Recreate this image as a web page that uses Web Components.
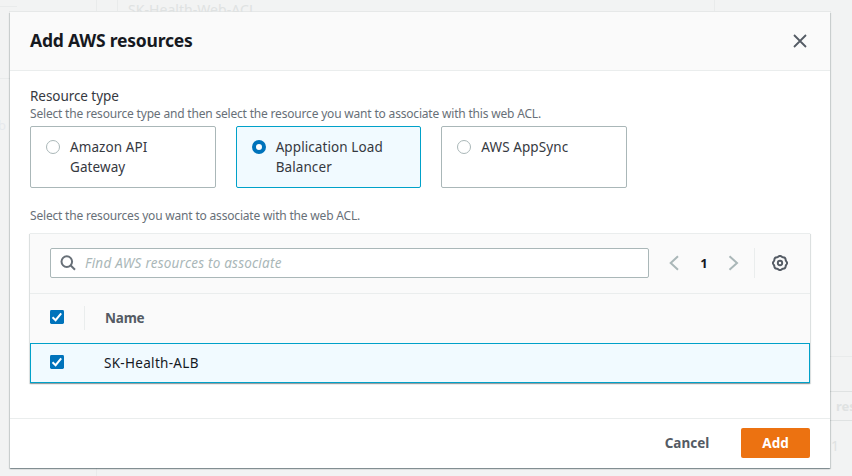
<!DOCTYPE html>
<html lang="en">
<head>
<meta charset="utf-8">
<title>Add AWS resources</title>
<style>
body { margin: 0; background: #f2f3f3; font-family: "Noto Sans", "Open Sans", sans-serif; font-size: 14px; color: #16191f; overflow: hidden; }
</style>
</head>
<body>
<page-shell></page-shell>
<script>
const define = (name, html, init) => {
  const t = document.createElement('template');
  t.innerHTML = html;
  customElements.define(name, class extends HTMLElement {
    constructor() {
      super();
      this.attachShadow({ mode: 'open' }).append(t.content.cloneNode(true));
    }
    connectedCallback() { if (init) init(this, this.shadowRoot); }
  });
};

define('check-box', `
<style>:host{display:block;width:14px;height:14px}svg{display:block}</style>
<svg width="14" height="14" viewBox="0 0 14 14"><rect width="14" height="14" rx="1.4" fill="#0073bb"/><path d="M2.5 7.3 5.6 10.2 11.2 3.4" fill="none" stroke="#fff" stroke-width="2"/></svg>`);

define('radio-tile', `
<style>
:host{display:flex;box-sizing:border-box;height:62px;border:1px solid #aab7b8;border-radius:2px;padding:10px 15px;gap:10px;background:#fff;line-height:20px;font-size:13.5px;letter-spacing:.09px;color:#36393f}
:host([checked]){border-color:#00a1c9;background:#f1faff}
i{box-sizing:border-box;flex:none;width:14px;height:14px;margin-top:3px;border:1px solid #aab7b8;border-radius:50%;background:#fff}
:host([checked]) i{border:4px solid #0073bb}
span{white-space:nowrap}
</style><i></i><span><slot></slot></span>`);

define('modal-header', `
<style>
:host{display:flex;box-sizing:border-box;height:59px;align-items:center;justify-content:space-between;padding:0 23px 0 20px;background:#fafafa;border-bottom:1px solid #eaeded}
h2{margin:0 0 2px;font-size:17.5px;line-height:22px;font-weight:700;letter-spacing:-.2px;color:#16191f}
svg{display:block}
</style><h2><slot></slot></h2>
<svg width="14" height="14" viewBox="0 0 14 14"><path d="M1 1 13 13M13 1 1 13" stroke="#545b64" stroke-width="1.8"/></svg>`);

define('search-field', `
<style>
:host{display:flex;box-sizing:border-box;width:599px;height:30px;align-items:center;gap:9px;padding-left:9px;border:1px solid #aab7b8;border-radius:2px;background:#fff;color:#aab7b8;font-size:13.5px;letter-spacing:.22px;font-style:italic}
svg{flex:none}
</style>
<svg width="16" height="16" viewBox="0 0 16 16" fill="none" stroke="#687078" stroke-width="2"><circle cx="6.8" cy="6.6" r="5.3"/><path d="M10.5 10.3 15 14.8"/></svg><span><slot></slot></span>`);

define('table-pager', `
<style>
:host{display:flex;align-items:center;height:30px}
svg{display:block}
b{width:10px;margin:0 19px 0 20px;font-size:13px;text-align:center}
.rule{width:1px;height:30px;margin:0 17px 0 15px;background:#eaeded}
</style>
<svg width="11" height="16" viewBox="0 0 11 16"><path d="M10 1.2 2.7 8 10 14.8" fill="none" stroke="#aab7b8" stroke-width="2"/></svg>
<b>1</b>
<svg width="11" height="16" viewBox="0 0 11 16"><path d="M1.5 1.2 9 8 1.5 14.8" fill="none" stroke="#aab7b8" stroke-width="2"/></svg>
<span class="rule"></span>
<svg id="gear" width="16" height="16" viewBox="0 0 16 16" fill="none" stroke="#545b64" stroke-width="2"><path/><circle cx="8" cy="8" r="2.2" stroke-width="1.9"/></svg>`,
(el, root) => {
  let d = '';
  for (let i = 0; i <= 96; i++) {
    const a = i * Math.PI / 48, r = 6.7 + .35 * Math.cos(8 * a);
    d += (i ? 'L' : 'M') + (8 + r * Math.cos(a)).toFixed(2) + ' ' + (8 + r * Math.sin(a)).toFixed(2);
  }
  root.querySelector('#gear path').setAttribute('d', d + 'Z');
});

define('resource-table', `
<style>
:host{display:block;height:150px;border-top:1px solid #eaeded;box-sizing:border-box;box-shadow:0 1px 1px rgba(0,28,36,.3),1px 1px 1px rgba(0,28,36,.09),-1px 1px 1px rgba(0,28,36,.09);background:#fafafa}
.tools{display:flex;box-sizing:border-box;height:60px;justify-content:space-between;align-items:center;padding:0 22px 1px 20px;border-bottom:1px solid #eaeded}
.row{display:flex;box-sizing:border-box;align-items:center;padding-left:20px}
.head{height:49px;padding-bottom:2px;color:#545b64;font-weight:700;font-size:13.5px}
.head check-box{margin-bottom:2px}
.head i{width:1px;height:24px;margin:0 20px;background:#eaeded}
.head span{letter-spacing:-.2px}
.item{height:40px;border:1px solid #00a1c9;padding:0 0 2px 19px;gap:40px;background:#f1faff;font-size:13.5px}
.item span{letter-spacing:.3px;margin-top:2px}
</style>
<div class="tools"><search-field><slot name="placeholder"></slot></search-field><table-pager></table-pager></div>
<div class="row head"><check-box></check-box><i></i><span>Name</span></div>
<div class="row item"><check-box></check-box><span><slot></slot></span></div>`);

define('action-button', `
<style>
:host{display:flex;align-items:center;justify-content:center;box-sizing:border-box;height:30px;width:86px;border-radius:2px;font-weight:700;font-size:13.5px;color:#545b64}
:host([primary]){width:69px;background:#ec7211;color:#fff}
</style><span><slot></slot></span>`);

define('modal-dialog', `
<style>
:host{display:flex;flex-direction:column;box-sizing:border-box;width:820px;height:456px;background:#fff;box-shadow:0 1px 1px rgba(0,28,36,.3),1px 1px 1px rgba(0,28,36,.12),-1px 1px 1px rgba(0,28,36,.12)}
.body{display:flex;flex-direction:column;flex:1;padding:15px 20px 0}
.label{height:20px;line-height:20px;font-size:13.5px;letter-spacing:-.06px;color:#36393f}
.hint{height:16px;line-height:16px;font-size:12px;letter-spacing:-.187px;color:#687078;white-space:nowrap}
.tiles{display:grid;grid-template-columns:repeat(3,1fr);gap:20px;width:597px;margin:4px 0 20px}
.foot{display:flex;box-sizing:border-box;height:50px;justify-content:flex-end;align-items:center;gap:11px;padding:0 20px 1px 0;border-top:1px solid #eaeded}
resource-table{margin-top:9px}
</style>
<modal-header>Add AWS resources</modal-header>
<div class="body">
<div class="label"><span>Resource type</span></div>
<div class="hint"><span>Select the resource type and then select the resource you want to associate with this web ACL.</span></div>
<div class="tiles"><radio-tile>Amazon API<br>Gateway</radio-tile><radio-tile checked>Application Load<br>Balancer</radio-tile><radio-tile>AWS AppSync</radio-tile></div>
<div class="hint"><span>Select the resources you want to associate with the web ACL.</span></div>
<resource-table><span slot="placeholder">Find AWS resources to associate</span>SK-Health-ALB</resource-table>
</div>
<div class="foot"><action-button>Cancel</action-button><action-button primary>Add</action-button></div>`);

define('page-backdrop', `
<style>
:host{position:absolute;inset:0;color:#dfe2e2;overflow:hidden}
i,span{position:absolute;white-space:nowrap}
i{background:#e9ebeb}
</style>
<i style="left:96px;top:0;width:1px;height:476px"></i><i style="left:117px;top:0;width:1px;height:12px"></i><i style="left:714px;top:0;width:1px;height:12px"></i>
<i style="left:0;top:6px;width:17px;height:1px"></i><i style="left:0;top:78px;width:10px;height:1px"></i>
<i style="left:9px;top:11px;width:822px;height:1px;background:#e6e8e8"></i>
<i style="left:830px;top:356px;width:22px;height:1px"></i><i style="left:830px;top:391px;width:22px;height:1px;background:#dfe2e2"></i><i style="left:830px;top:420px;width:22px;height:1px;background:#dfe2e2"></i>
<span style="left:128px;top:0;line-height:20px;letter-spacing:.05px">SK-Health-Web-ACL</span>
<span style="left:-2px;top:115px;line-height:20px;font-size:13px;color:#e6e9ed">b</span>
<span style="left:836px;top:396px;line-height:20px;font-size:13px;font-weight:700">res</span>
<span style="left:831px;top:436px;line-height:20px">1</span>`);

define('page-shell', `
<style>
:host{display:block;position:relative;box-sizing:border-box;width:852px;height:476px;padding:12px 0 0 10px;overflow:hidden}
modal-dialog{position:relative}
</style><page-backdrop></page-backdrop><modal-dialog></modal-dialog>`);
</script>
</body>
</html>
